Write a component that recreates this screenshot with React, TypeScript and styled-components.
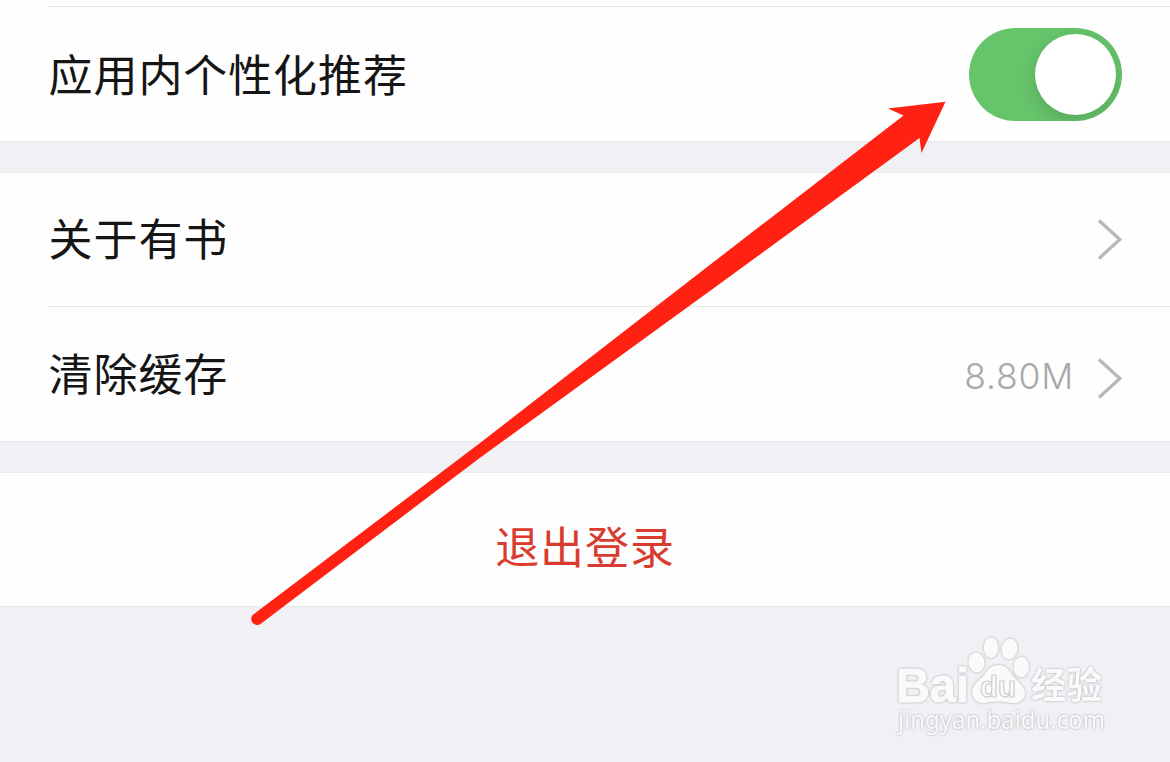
import React, {FC, ReactNode} from 'react';
import styled, {createGlobalStyle} from "styled-components";

const GlobalStyle = createGlobalStyle`
  body {
    margin: 0;
    background: #f0f0f5;
    font-family: "Noto Sans CJK SC", sans-serif;
  }
`

const Page = styled.main`
  position: relative;
  display: flex;
  flex-direction: column;
  gap: 30px;
  width: 1170px;
  height: 762px;
  overflow: hidden;
`

const Group = styled.section<{ $first?: boolean }>`
  background: #fefefe;
  border-bottom: 1px solid #e6e6e9;
  border-top: ${props => props.$first ? "none" : "1px solid #ebebee"};
  padding-top: ${props => props.$first ? "6px" : 0};
`

const RowWrapper = styled.div<{ $line?: boolean, $height?: number }>`
  box-sizing: border-box;
  display: flex;
  align-items: center;
  justify-content: space-between;
  height: ${props => props.$height || 134}px;
  margin-left: 48px;
  padding-left: 0.6px;
  padding-right: 48px;
  border-top: ${props => props.$line ? "1px solid #e8e8ea" : "none"};
`

const Title = styled.span<{ $lift?: number }>`
  padding-bottom: ${props => props.$lift || 0}px;
  font-size: 44px;
  line-height: 60px;
  letter-spacing: 0.9px;
  color: #151515;
`

const Side = styled.div<{ $drop?: number }>`
  display: flex;
  align-items: center;
  gap: 23px;
  padding-top: ${props => props.$drop || 0}px;
`

const Value = styled.span`
  padding-bottom: 4px;
  font-family: Inter, sans-serif;
  font-size: 35.5px;
  font-weight: 300;
  line-height: 44px;
  letter-spacing: 0.8px;
  color: #a9a9a9;
`

const Switch = styled.button`
  display: flex;
  justify-content: flex-end;
  align-items: center;
  box-sizing: border-box;
  width: 153px;
  height: 93px;
  padding: 0 6px;
  border: none;
  border-radius: 47px;
  background: #66c46a;
  overflow: hidden;
`

const Knob = styled.span`
  width: 81px;
  height: 81px;
  border-radius: 50%;
  background: white;
  box-shadow: 0 6px 18px rgba(0, 0, 0, 0.14);
`

const LogoutButton = styled.button`
  display: flex;
  align-items: center;
  justify-content: center;
  width: 100%;
  height: 133px;
  padding: 10px 0 0;
  border: none;
  background: none;
  font: inherit;
  font-size: 44px;
  letter-spacing: 0.9px;
  color: #d93b2f;
`

const ArrowOverlay = styled.svg`
  position: absolute;
  top: 0;
  left: 0;
  pointer-events: none;
`

const WatermarkOverlay = styled.svg`
  position: absolute;
  right: 50px;
  bottom: 7px;
  overflow: visible;
  pointer-events: none;
  filter: drop-shadow(0 0 1px rgba(90, 90, 95, 0.5));
`

const Chevron: FC = () => (
    <svg width="25" height="42" viewBox="0 0 25 42" fill="none">
        <path d="M2 1.5 L22.8 20.5 L2 39.5" stroke="#b8b8b8" strokeWidth="3.3"/>
    </svg>
)

type RowProps = {
    title: string,
    line?: boolean,
    height?: number,
    lift?: number,
    drop?: number,
    children?: ReactNode
}

const Row: FC<RowProps> = (props) => (
    <RowWrapper $line={props.line} $height={props.height}>
        <Title $lift={props.lift}>{props.title}</Title>
        <Side $drop={props.drop}>{props.children}</Side>
    </RowWrapper>
)

const Watermark: FC = () => (
    <WatermarkOverlay width="240" height="125" viewBox="880 630 240 125" fill="#fafafa">
        <text x="896" y="701.5" fontFamily="Liberation Sans" fontWeight="700" fontSize="48" stroke="#fafafa" strokeWidth="1" textLength="73" lengthAdjust="spacingAndGlyphs">Bai</text>
        <ellipse cx="976.5" cy="662.5" rx="8" ry="10" transform="rotate(-8 976.5 662.5)"/>
        <ellipse cx="991" cy="647.7" rx="7.3" ry="10.5"/>
        <ellipse cx="1009.5" cy="649" rx="8" ry="10.3" transform="rotate(10 1009.5 649)"/>
        <ellipse cx="1021.3" cy="667" rx="7.8" ry="10.3"/>
        <path d="M998.5 665 C1006 665 1009 670 1013 676 C1018 682 1025 686 1025 693 C1025 700 1019 704 1011 703 C1002 701 995 701 986 703 C978 704 972 700 972 692 C972 684 979 681 984 675 C988 669 991 665 998.5 665Z"/>
        <text x="980" y="697" fontFamily="Liberation Sans" fontWeight="700" fontSize="29" stroke="#cdcdd1" strokeWidth="1.2" textLength="36" lengthAdjust="spacingAndGlyphs">du</text>
        <text x="1031" y="699" fontFamily="Noto Sans CJK SC" fontWeight="700" fontSize="37" textLength="71" lengthAdjust="spacingAndGlyphs">经验</text>
        <text x="898" y="729" fontFamily="Noto Sans" fontSize="25" textLength="207" lengthAdjust="spacingAndGlyphs">jingyan.baidu.com</text>
    </WatermarkOverlay>
)

const App: FC = () => {
    return (
        <>
            <GlobalStyle/>
            <Page>
                <Group $first>
                    <Row title="应用内个性化推荐" line height={135} lift={2}>
                        <Switch role="switch" aria-checked="true">
                            <Knob/>
                        </Switch>
                    </Row>
                </Group>
                <Group>
                    <Row title="关于有书" height={133} lift={5}>
                        <Chevron/>
                    </Row>
                    <Row title="清除缓存" line height={135} lift={4} drop={10}>
                        <Value>8.80M</Value>
                        <Chevron/>
                    </Row>
                </Group>
                <Group>
                    <LogoutButton>退出登录</LogoutButton>
                </Group>
                <ArrowOverlay width="1170" height="762" viewBox="0 0 1170 762">
                    <path
                        d="M252.9 614.8 L480 443 L700 272.5 L903.5 115.5 L888 108.5 L945.5 101.7 L921.5 153 L919.5 138 L725 280 L480 457.8 L260.5 624 A6 6 0 0 1 252.9 614.8Z"
                        fill="#ff2212"
                    />
                </ArrowOverlay>
                <Watermark/>
            </Page>
        </>
    );
};

export default App;
